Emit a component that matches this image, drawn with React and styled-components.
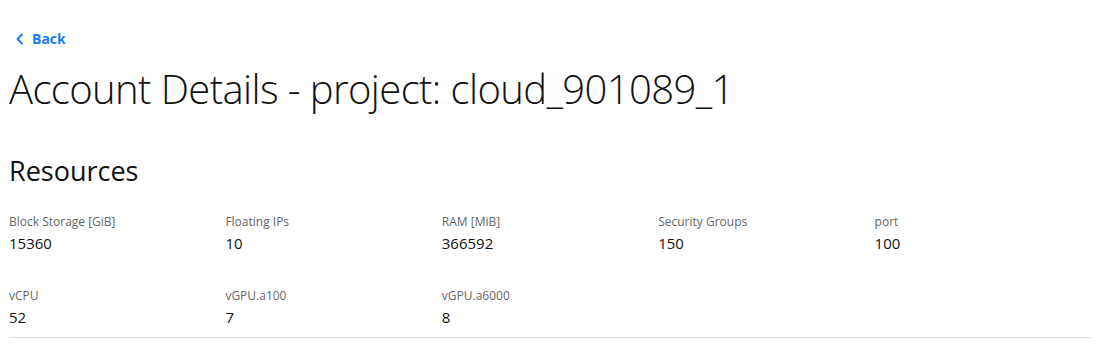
import React from "react";
import styled, { createGlobalStyle } from "styled-components";

const GlobalStyle = createGlobalStyle`
  body {
    margin: 0;
    background: #ffffff;
    font-family: "Open Sans", "Noto Sans", sans-serif;
    color: #111;
  }
`;

const resources = [
  { label: "Block Storage [GiB]", value: "15360" },
  { label: "Floating IPs", value: "10" },
  { label: "RAM [MiB]", value: "366592" },
  { label: "Security Groups", value: "150" },
  { label: "port", value: "100" },
  { label: "vCPU", value: "52" },
  { label: "vGPU.a100", value: "7" },
  { label: "vGPU.a6000", value: "8" },
];

const App = () => {
  return (
    <Page>
      <GlobalStyle />
      <BackLink href="#">
        <svg width="10" height="12" viewBox="0 0 10 12" fill="none">
          <path d="M7 1.5L2.5 6L7 10.5" stroke="currentColor" strokeWidth="2" strokeLinecap="round" strokeLinejoin="round" />
        </svg>
        Back
      </BackLink>
      <Title>Account Details - project: cloud_901089_1</Title>
      <SectionTitle>Resources</SectionTitle>
      <ResourceGrid>
        {resources.map((item, index) => (
          <ResourceItem key={`resource - ${index}`}>
            <ResourceLabel>{item.label}</ResourceLabel>
            <ResourceValue>{item.value}</ResourceValue>
          </ResourceItem>
        ))}
      </ResourceGrid>
    </Page>
  );
};

export default App;

const Page = styled.div`
  padding: 29px 9px 0 9px;
  display: flex;
  flex-direction: column;
  align-items: flex-start;
`;
const BackLink = styled.a`
  display: flex;
  align-items: center;
  gap: 7px;
  margin-left: 6px;
  color: #1a7cf0;
  font-weight: 700;
  font-size: 14px;
  text-decoration: none;
  line-height: 20px;
`;
const Title = styled.h1`
  margin: 14px 0 0 0;
  font-weight: 300;
  font-size: 40px;
  letter-spacing: -0.6px;
  line-height: 52px;
  color: #111;
`;
const SectionTitle = styled.h2`
  margin: 38px 0 0 0;
  font-weight: 400;
  font-size: 27px;
  line-height: 36px;
  color: #111;
`;
const ResourceGrid = styled.div`
  align-self: stretch;
  margin-top: 24px;
  display: grid;
  grid-template-columns: repeat(5, 1fr);
  row-gap: 32px;
  padding-bottom: 8px;
  border-bottom: 1px solid #dedede;
`;
const ResourceItem = styled.div`
  display: flex;
  flex-direction: column;
`;
const ResourceLabel = styled.span`
  font-size: 12px;
  line-height: 18px;
  color: #666;
`;
const ResourceValue = styled.span`
  font-size: 15px;
  line-height: 24px;
  color: #111;
`;
